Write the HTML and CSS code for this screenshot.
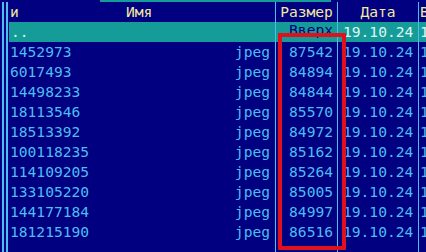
FILE: index.html
```
<!DOCTYPE html>
<html lang="ru">
<head>
  <meta charset="UTF-8" />
  <title>Far - панель</title>
  <link rel="stylesheet" href="styles.css">
</head>
<body>
  <div class="panel">
    <div class="topstrip"><span class="path"></span></div>
    <div class="frame">
      <div class="row head">
        <div class="c-name"><span class="lbl-left">и</span><span class="lbl-mid">Имя</span></div>
        <div class="c-size center">Размер</div>
        <div class="c-date center">Дата</div>
        <div class="c-time">В</div>
      </div>
      <div class="row up">
        <div class="c-name">..</div>
        <div class="c-size"><span class="upword">Вверх</span></div>
        <div class="c-date">19.10.24</div>
        <div class="c-time">1</div>
      </div>
      <div class="row"><div class="c-name"><span>1452973</span><span class="ext">jpeg</span></div><div class="c-size">87542</div><div class="c-date">19.10.24</div><div class="c-time">1</div></div>
      <div class="row"><div class="c-name"><span>6017493</span><span class="ext">jpeg</span></div><div class="c-size">84894</div><div class="c-date">19.10.24</div><div class="c-time">1</div></div>
      <div class="row"><div class="c-name"><span>14498233</span><span class="ext">jpeg</span></div><div class="c-size">84844</div><div class="c-date">19.10.24</div><div class="c-time">1</div></div>
      <div class="row"><div class="c-name"><span>18113546</span><span class="ext">jpeg</span></div><div class="c-size">85570</div><div class="c-date">19.10.24</div><div class="c-time">1</div></div>
      <div class="row"><div class="c-name"><span>18513392</span><span class="ext">jpeg</span></div><div class="c-size">84972</div><div class="c-date">19.10.24</div><div class="c-time">1</div></div>
      <div class="row"><div class="c-name"><span>100118235</span><span class="ext">jpeg</span></div><div class="c-size">85162</div><div class="c-date">19.10.24</div><div class="c-time">1</div></div>
      <div class="row"><div class="c-name"><span>114109205</span><span class="ext">jpeg</span></div><div class="c-size">85264</div><div class="c-date">19.10.24</div><div class="c-time">1</div></div>
      <div class="row"><div class="c-name"><span>133105220</span><span class="ext">jpeg</span></div><div class="c-size">85005</div><div class="c-date">19.10.24</div><div class="c-time">1</div></div>
      <div class="row"><div class="c-name"><span>144177184</span><span class="ext">jpeg</span></div><div class="c-size">84997</div><div class="c-date">19.10.24</div><div class="c-time">1</div></div>
      <div class="row"><div class="c-name"><span>181215190</span><span class="ext">jpeg</span></div><div class="c-size">86516</div><div class="c-date">19.10.24</div><div class="c-time">1</div></div>
      <div class="row empty"><div class="c-name"></div><div class="c-size"></div><div class="c-date"></div><div class="c-time"></div></div>
    </div>
    <!-- red highlight drawn over the size column -->
    <div class="mark"></div>
  </div>
</body>
</html>
```

FILE: styles.css
```
*{margin:0;padding:0;box-sizing:border-box;}
body{background:#000080;font-family:'DejaVu Sans Mono','Liberation Mono',monospace;font-size:14.6px;color:#4cbdf2;}

.panel{position:relative;width:426px;height:252px;overflow:hidden;background:#000080;}
.topstrip{height:2px;display:flex;}
.path{margin-left:100px;width:231px;height:2px;background:#169c98;}

.frame{margin-left:2px;border-left:6px double #4cbdf2;height:250px;}

.row{display:flex;height:20px;line-height:20px;white-space:nowrap;}
.row > div{height:20px;overflow:hidden;}
.c-name{width:267px;padding:0 5px 0 2px;display:flex;justify-content:space-between;}
.c-size{width:62px;border-left:1px solid #4cbdf2;text-align:right;padding-right:4px;}
.c-date{width:81px;border-left:1px solid #4cbdf2;padding-left:5px;}
.c-time{flex:1;border-left:1px solid #4cbdf2;padding-left:1px;}
.center{text-align:center;padding:0;}

.head{color:#f2ea9c;}
.head .c-name{justify-content:flex-start;}
.lbl-left{width:110px;}
.lbl-mid{margin-left:6px;}

.up{background:#169c98;color:#dff6f4;margin-left:1px;}
.up .c-name{width:266px;}
.upword{color:#000080;position:relative;top:-2px;}
.empty{height:10px;}
.empty > div{height:10px;}

.mark{position:absolute;left:278px;top:33px;width:68px;height:217px;border:4px solid #e0101c;border-radius:1px;}
```
